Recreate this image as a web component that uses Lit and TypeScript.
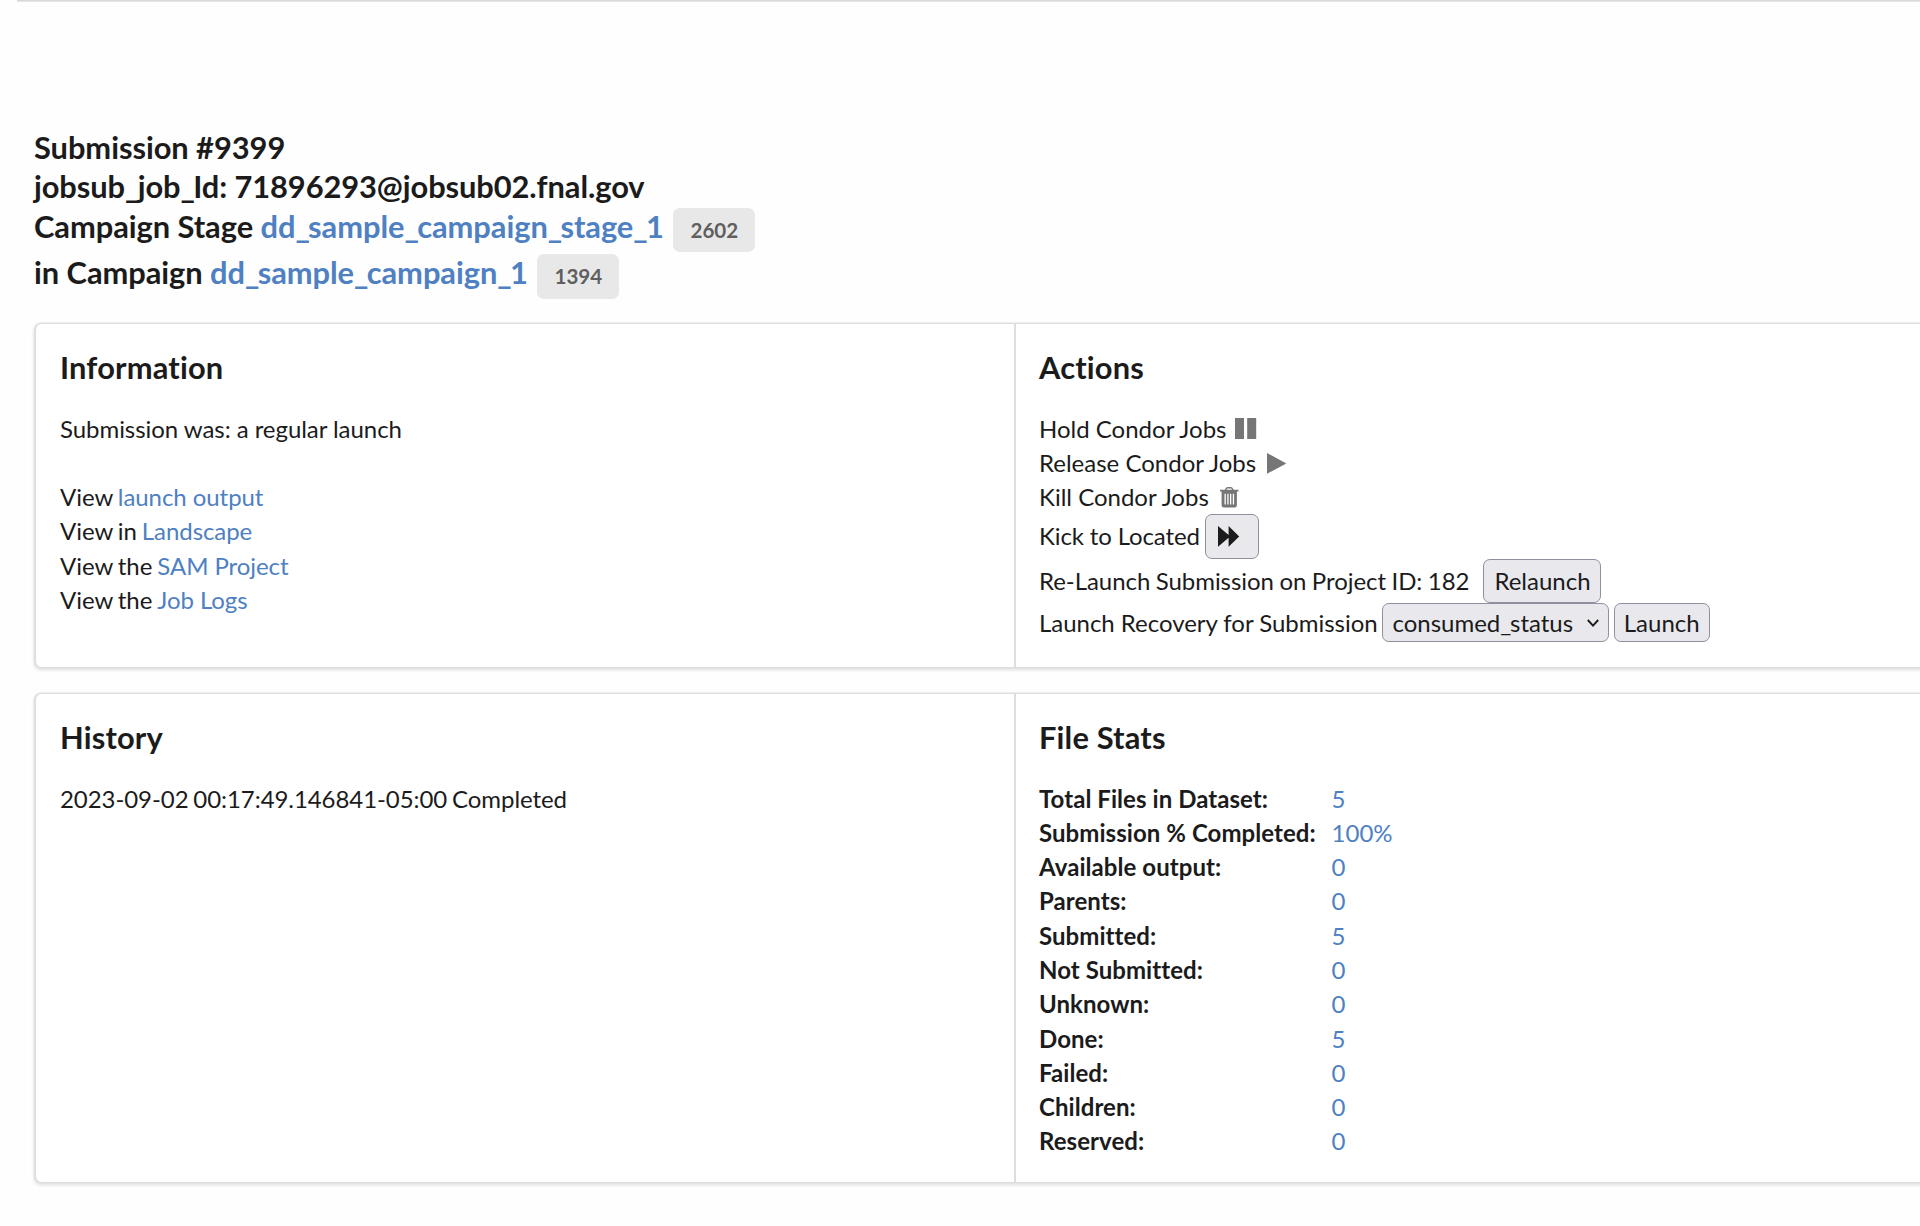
import { LitElement, html, css, svg } from "lit";
import { customElement } from "lit/decorators.js";

const STATS: [string, string][] = [
  ["Total Files in Dataset:", "5"],
  ["Submission % Completed:", "100%"],
  ["Available output:", "0"],
  ["Parents:", "0"],
  ["Submitted:", "5"],
  ["Not Submitted:", "0"],
  ["Unknown:", "0"],
  ["Done:", "5"],
  ["Failed:", "0"],
  ["Children:", "0"],
  ["Reserved:", "0"],
];

const LINKS: [string, string][] = [
  ["View", "launch output"],
  ["View in", "Landscape"],
  ["View the", "SAM Project"],
  ["View the", "Job Logs"],
];

const pause = svg`<rect x="0" y="0" width="9" height="21"/><rect x="12.2" y="0" width="9" height="21"/>`;
const play = svg`<path d="M0 0 L19.3 10.4 L0 20.8 Z"/>`;
const trash = svg`<path fill-rule="evenodd" d="M0 2.7H4.7L6.3.6Q6.8 0 7.6 0H10.9Q11.7 0 12.2.6L13.8 2.7H18.5V4.5H16.9V18.2Q16.9 20.6 14.6 20.6H3.9Q1.6 20.6 1.6 18.2V4.5H0ZM6.4 2.7H12.1L11.2 1.4H7.3ZM4.5 6.8V17.6H5.8V6.8ZM7.3 6.8V17.6H8.6V6.8ZM10 6.8V17.6H11.3V6.8ZM12.8 6.8V17.6H14.1V6.8Z"/>`;
const forward = svg`<path d="M0 0 L10.6 9 V0 L21.2 10.4 L10.6 20.8 V11.8 L0 20.8 Z"/>`;

// Identifiers are set with slightly tightened underscores.
const ident = (text: string) =>
  text.split("_").map((part, i) => (i ? html`<span class="us">_</span>${part}` : part));

@customElement("app-root")
export class AppRoot extends LitElement {
  static styles = css`
    :host {
      display: block;
      height: 1226px;
      overflow: hidden;
      background: #fefefe;
      color: #1b1b1c;
      font: 24px/34.28px Lato, "Liberation Sans", sans-serif;
      font-variant-ligatures: none;
    }
    * { box-sizing: border-box; }
    .rule { height: 2px; margin-left: 17px; background: linear-gradient(#d9d9da 1px, #e5e5e5 1px); }
    .page { padding: 125.8px 0 0 34px; }
    .title, h3 { font-size: 30.857px; line-height: 39.67px; font-weight: 700; margin: 0; }
    .title { height: 195.2px; }
    .line { display: flex; align-items: baseline; height: 39.5px; white-space: pre; letter-spacing: -0.06px; }
    .job { letter-spacing: -0.09px; }
    .line.tagged { height: 46.2px; }
    .us { letter-spacing: -0.055em; }
    a { color: #4e80c2; text-decoration: none; }
    .label {
      margin-left: 9.5px;
      padding: 12px 17.14px;
      border-radius: 6.86px;
      background: #e8e8e8;
      color: #5f5f5f;
      font-size: 20.57px;
      line-height: 20.57px;
      letter-spacing: 0;
    }
    .card {
      display: flex;
      width: 1962px;
      margin-bottom: 25px;
      border: 2px solid #dededf;
      border-top-width: 1px;
      border-bottom-width: 1px;
      border-radius: 7px;
      background: #fff;
      box-shadow: 0 -1px 0 rgba(34, 36, 38, 0.04), 0 1.7px 3.4px rgba(34, 36, 38, 0.15);
    }
    .first { height: 345px; }
    .second { height: 490px; }
    .col { width: 978px; padding: 24px; }
    .col + .col { width: 980px; border-left: 2px solid #dededf; padding-left: 23px; }
    h3 { margin-bottom: 24px; letter-spacing: 0.16px; }
    .row { display: flex; align-items: center; height: 34.28px; white-space: pre; }
    .row svg { flex: none; overflow: visible; fill: #767676; }
    .gap { height: 34.28px; }
    .info { letter-spacing: -0.05px; }
    .pre { word-spacing: -1.3px; }
    .row a { letter-spacing: -0.06px; }
    .stamp { letter-spacing: -0.07px; word-spacing: -1.2px; }
    .row.kick { height: 44.2px; }
    .kick > span { letter-spacing: -0.13px; }
    .row.relaunch { height: 44.8px; }
    .relaunch > span { letter-spacing: -0.05px; word-spacing: -0.6px; }
    .row.launch { height: 39px; }
    .launch > span { letter-spacing: -0.03px; }
    .btn {
      display: flex;
      align-items: center;
      border: 1.7px solid #8f8f9d;
      border-radius: 6.9px;
      background: #e9e9ed;
      color: #1b1b1c;
      font: inherit;
      padding: 0 9px;
      height: 39px;
    }
    .btn.tall { height: 44.3px; }
    .btn.icon { width: 54.5px; padding: 0 0 0 12px; margin-left: 5px; }
    .btn.icon svg { fill: #1b1b1c; }
    .btn.re { margin-left: 14px; padding: 0 10px; width: 118px; }
    .btn.pick { width: 226.2px; margin-left: 4.8px; padding: 0 9px; justify-content: space-between; }
    .btn.go { width: 96px; margin-left: 5.2px; }
    .btn.pick svg { fill: none; stroke: #1b1b1c; stroke-width: 1.9; }
    .pauseicon { margin-left: 9px; }
    .playicon { margin-left: 11px; }
    .trashicon { margin-left: 11.6px; }
    .stats { display: grid; grid-template-columns: 292.6px auto; grid-auto-rows: 34.28px; justify-content: start; }
    .name { font-weight: 700; letter-spacing: 0.06px; }
  `;

  render() {
    return html`
      <div class="rule"></div>
      <main class="page">
        <header class="title">
          <div class="line">Submission #9399</div>
          <div class="line job"><span>${ident("jobsub_job_Id: 71896293@jobsub02.fnal.gov")}</span></div>
          <div class="line tagged"><span>Campaign Stage <a>${ident("dd_sample_campaign_stage_1")}</a></span><span class="label">2602</span></div>
          <div class="line tagged"><span>in Campaign <a>${ident("dd_sample_campaign_1")}</a></span><span class="label">1394</span></div>
        </header>
        <section class="card first">
          <div class="col">
            <h3>Information</h3>
            <div class="row info">Submission was: a regular launch</div>
            <div class="gap"></div>
            ${LINKS.map(([pre, text]) => html`<div class="row"><span><span class="pre">${pre} </span><a>${text}</a></span></div>`)}
          </div>
          <div class="col">
            <h3>Actions</h3>
            <div class="row"><span>Hold Condor Jobs</span><svg class="pauseicon" width="21.2" height="21">${pause}</svg></div>
            <div class="row"><span>Release Condor Jobs</span><svg class="playicon" width="19.3" height="20.8">${play}</svg></div>
            <div class="row"><span>Kill Condor Jobs</span><svg class="trashicon" width="18.5" height="20.6">${trash}</svg></div>
            <div class="row kick"><span>Kick to Located</span><button class="btn tall icon"><svg width="21.2" height="20.8">${forward}</svg></button></div>
            <div class="row relaunch"><span>Re-Launch Submission on Project ID: 182</span><button class="btn tall re">Relaunch</button></div>
            <div class="row launch"><span>Launch Recovery for Submission</span><div class="btn pick"><span>${ident("consumed_status")}</span><svg width="12" height="8"><path d="M.8 1L6 6.6L11.2 1"/></svg></div><button class="btn go">Launch</button></div>
          </div>
        </section>
        <section class="card second">
          <div class="col">
            <h3>History</h3>
            <div class="row stamp">2023-09-02 00:17:49.146841-05:00 Completed</div>
          </div>
          <div class="col">
            <h3>File Stats</h3>
            <div class="stats">
              ${STATS.map(([name, value]) => html`<span class="name">${name}</span><a>${value}</a>`)}
            </div>
          </div>
        </section>
      </main>
    `;
  }
}
